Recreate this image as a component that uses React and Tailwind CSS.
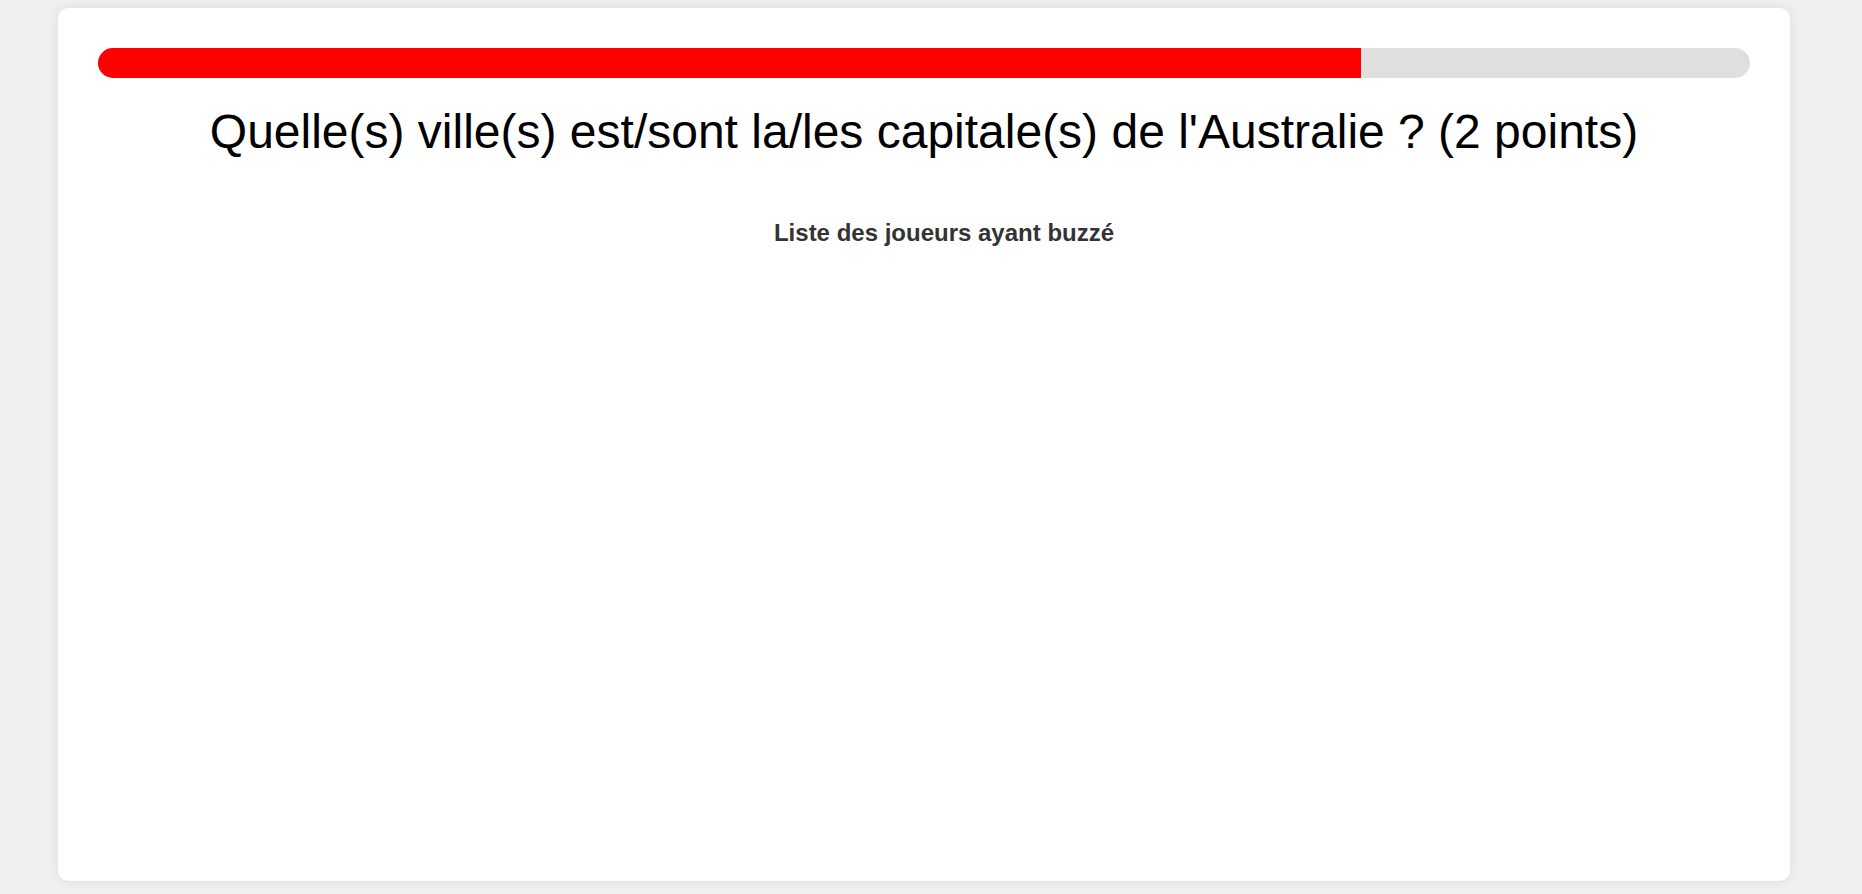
export default function App() {
    return (
        <div className="min-h-[894px] bg-[#efefef] pt-2 pl-[58px]" style={{ fontFamily: '"Liberation Sans", Arial, sans-serif' }}>
            <div className="w-[1732px] h-[873px] bg-white rounded-[10px] shadow-[0_0_10px_rgba(0,0,0,0.08)] p-10">
                {/* Timer bar */}
                <div className="h-[30px] w-full bg-[#dfdfdf] rounded-full overflow-hidden">
                    <div className="h-full w-[1263px] bg-[#ff0000]" />
                </div>

                <h1 className="mt-[26px] text-center text-[48px] leading-[55px] text-black">
                    Quelle(s) ville(s) est/sont la/les capitale(s) de l'Australie ? (2 points)
                </h1>

                {/* Buzzed players list */}
                <div className="mt-[60px] pl-10">
                    <h3 className="text-center text-[24px] leading-[28px] font-bold text-[#333333]">
                        Liste des joueurs ayant buzzé
                    </h3>
                </div>
            </div>
        </div>
    );
}
